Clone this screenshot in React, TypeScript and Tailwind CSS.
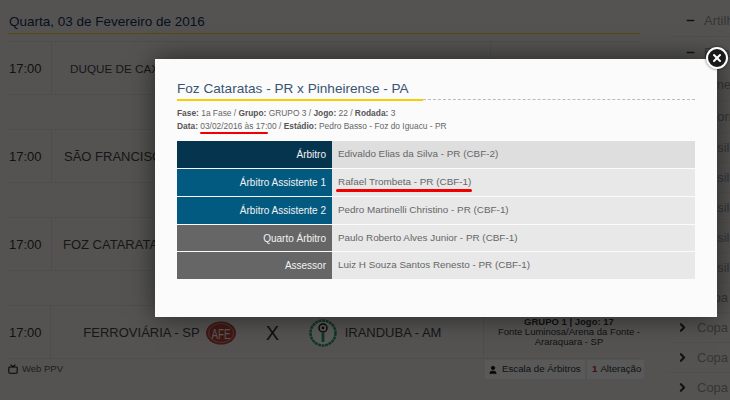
import React from 'react';
import { ChevronRight, Minus, User, Tv, X } from 'lucide-react';

type Match = {
  home: string;
  away: string;
  pad: string;
  size: string;
  logos?: boolean;
};

const matches: Match[] = [
  { home: 'DUQUE DE CAXIAS', away: 'TUPI - MG', pad: 'pl-[18px]', size: 'text-[11.7px]' },
  { home: 'SÃO FRANCISCO - PA', away: 'VILHENA - RO', pad: 'pl-[12px]', size: 'text-[13px]' },
  { home: 'FOZ CATARATAS - PR', away: 'PINHEIRENSE - PA', pad: 'pl-[11px]', size: 'text-[13px]' },
  { home: 'FERROVIÁRIA - SP', away: 'IRANDUBA - AM', pad: 'pl-[32px]', size: 'text-[13px]', logos: true },
];

const sidebar = [
  { label: 'Artilharia', open: true, h: 'h-[32px]' },
  { label: 'Estaduais', open: true, h: 'h-[32px]' },
  { label: 'Primeira', open: false, h: 'h-[32px]' },
  { label: 'Reforma', open: false, h: 'h-[32px]' },
  { label: 'Brasileiro', open: false, h: 'h-[30px]' },
  { label: 'Brasileiro', open: false, h: 'h-[30px]' },
  { label: 'Brasileiro', open: false, h: 'h-[30px]' },
  { label: 'Brasileiro', open: false, h: 'h-[30px]' },
  { label: 'Brasileiro', open: false, h: 'h-[30px]' },
  { label: 'Copa', open: false, h: 'h-[30px]' },
  { label: 'Copa', open: false, h: 'h-[30px]' },
  { label: 'Copa', open: false, h: 'h-[30px]' },
  { label: 'Copa', open: false, h: 'h-[30px]' },
];

const escala = [
  { role: 'Árbitro', name: 'Edivaldo Elias da Silva - PR (CBF-2)', label: 'bg-[#04344e]', value: 'bg-[#dedede]', h: 'h-[27px]' },
  { role: 'Árbitro Assistente 1', name: 'Rafael Trombeta - PR (CBF-1)', label: 'bg-[#035a80]', value: 'bg-[#e8e8e8]', h: 'h-[27px]' },
  { role: 'Árbitro Assistente 2', name: 'Pedro Martinelli Christino - PR (CBF-1)', label: 'bg-[#035a80]', value: 'bg-[#e8e8e8]', h: 'h-[27px]' },
  { role: 'Quarto Árbitro', name: 'Paulo Roberto Alves Junior - PR (CBF-1)', label: 'bg-[#666666]', value: 'bg-[#e8e8e8]', h: 'h-[26px]' },
  { role: 'Assessor', name: 'Luiz H Souza Santos Renesto - PR (CBF-1)', label: 'bg-[#666666]', value: 'bg-[#e8e8e8]', h: 'h-[27px]' },
];

const AfeLogo = () => (
  <svg width="30" height="24" viewBox="0 0 30 24">
    <ellipse cx="15" cy="12" rx="15" ry="11.5" fill="#b8453a" />
    <ellipse cx="15" cy="12" rx="12.5" ry="9.5" fill="none" stroke="#e8d0c8" strokeWidth="0.6" />
    <text x="15" y="17.5" textAnchor="middle" fontSize="15" textLength="19" lengthAdjust="spacingAndGlyphs" fill="#ffffff" fontFamily="Liberation Sans, sans-serif">AFE</text>
  </svg>
);

const IrandubaLogo = () => (
  <svg width="30" height="30" viewBox="0 0 30 30">
    <circle cx="15" cy="15" r="12.5" fill="#ffffff" stroke="#2e9e5b" strokeWidth="2.5" strokeDasharray="3 0.6" />
    <circle cx="15" cy="10" r="4" fill="#ffffff" stroke="#222222" strokeWidth="1.5" />
    <circle cx="15" cy="10" r="1.4" fill="#222222" />
    <rect x="13.6" y="15" width="2.8" height="9" fill="#2e9e5b" />
  </svg>
);

const App: React.FC = () => {
  return (
    <div className="relative w-[730px] h-[400px] overflow-hidden bg-[#f0eeec] font-['Liberation_Sans',Arial,sans-serif]">
      {/* pagina atras do modal */}
      <div className="flex">
        <div className="ml-2 w-[632px] shrink-0">
          <div className="h-[34px] pt-[13px] pl-px border-b border-[#ffd21f] text-[13.5px] leading-[17px] text-[#14305a]">
            Quarta, 03 de Fevereiro de 2016
          </div>
          <div className="h-[7px]" />
          {matches.map((m) => (
            <div key={m.home} className="border-t border-[#dcdcdc]">
              <div className="flex h-[53px] border-b border-[#dcdcdc] text-[#444444]">
                <div className="w-[44px] border-r border-[#dcdcdc] flex items-center pl-px pt-[2px] text-[13px] text-[#333333]">17:00</div>
                <div className={`w-[439px] flex items-center pt-[2px] border-r border-[#dcdcdc] whitespace-nowrap overflow-hidden ${m.size} ${m.pad}`}>
                  <span>{m.home}</span>
                  {m.logos && (
                    <>
                      <span className="ml-[6px] flex"><AfeLogo /></span>
                      <span className="ml-[30px] w-[30px] text-[20px] leading-none text-[#333333]">X</span>
                      <span className="ml-[12px] flex"><IrandubaLogo /></span>
                      <span className="ml-[7px]">{m.away}</span>
                    </>
                  )}
                </div>
                {m.logos && (
                  <div className="flex-1 flex flex-col items-center justify-center pl-[14px] text-center text-[9.5px] leading-[10px] text-[#333333] whitespace-nowrap">
                    <b>GRUPO 1 | Jogo: 17</b>
                    <span>Fonte Luminosa/Arena da Fonte -</span>
                    <span>Araraquara - SP</span>
                  </div>
                )}
              </div>
              <div className="flex h-[34px] pt-[1px] items-start text-[#555555]">
                {m.logos && (
                  <>
                    <span className="flex items-center gap-[4px] h-[18px] text-[9.5px]">
                      <Tv size={10} strokeWidth={2.5} className="text-[#111111]" />
                      Web PPV
                    </span>
                    <span className="ml-auto flex items-center gap-[2px] -mr-[4px] text-[9.7px] text-[#333333]">
                      <span className="flex items-center gap-[4px] w-[100px] h-[19px] pl-[3px] bg-white">
                        <User size={10} fill="#111111" className="text-[#111111]" />
                        Escala de Árbitros
                      </span>
                      <span className="flex items-center gap-[3px] w-[57px] h-[19px] pl-[5px] bg-white">
                        <b className="text-[#c0282d]">1</b> Alteração
                      </span>
                    </span>
                  </>
                )}
              </div>
            </div>
          ))}
        </div>
        <div className="ml-[28px] flex-1 pt-[5px] min-w-0">
          {sidebar.map((item, i) => (
            <div key={i} className={`${item.h} flex items-center border-b border-[#e4e2e0] text-[13px] text-[#999999] whitespace-nowrap ${item.open ? 'pl-[17px] gap-[8px]' : 'pl-[8px] gap-[8px]'}`}>
              {item.open ? (
                <Minus size={11} strokeWidth={3.5} className="text-[#333333] shrink-0" />
              ) : (
                <ChevronRight size={13} strokeWidth={4} className="text-[#333333] shrink-0" />
              )}
              {item.label}
            </div>
          ))}
        </div>
      </div>

      {/* escurecimento */}
      <div className="absolute inset-0 bg-black/65" />

      {/* modal */}
      <div className="absolute left-[155px] top-[59px] w-[562px] h-[258px] bg-[#fbfbfb] shadow-[0_0_24px_rgba(0,0,0,0.55)] pl-[22px] pr-[22px] pt-[21px]">
        <h1 className="text-[13.6px] leading-[17px] font-normal text-[#3a5573]">Foz Cataratas - PR x Pinheirense - PA</h1>
        <div className="flex mt-[2px] items-start">
          <div className="w-[246px] border-t-2 border-[#f4d000]" />
          <div className="flex-1 border-t border-dashed border-[#bbbbbb]" />
        </div>
        <div className="mt-[6px] text-[8.4px] leading-[13px] text-[#666666]">
          <p><b className="text-[#555555]">Fase:</b> 1a Fase / <b className="text-[#555555]">Grupo:</b> GRUPO 3 / <b className="text-[#555555]">Jogo:</b> 22 / <b className="text-[#555555]">Rodada:</b> 3</p>
          <p><b className="text-[#555555]">Data:</b> 03/02/2016 às 17:00 / <b className="text-[#555555]">Estádio:</b> Pedro Basso - Foz do Iguacu - PR</p>
        </div>
        <div className="mt-[8px]">
          {escala.map((row) => (
            <div key={row.role} className={`flex ${row.h} mb-px`}>
              <div className={`w-[155px] ${row.label} flex items-center justify-end pr-[6px] text-[10px] text-[#f2f2f2]`}>{row.role}</div>
              <div className={`flex-1 ${row.value} flex items-center pl-[6px] text-[9.9px] text-[#666666]`}>{row.name}</div>
            </div>
          ))}
        </div>
        {/* marcacoes em vermelho */}
        <div className="absolute left-[45px] top-[73px] w-[68px] h-[2px] rounded-full bg-[#f00000]" />
        <div className="absolute left-[181px] top-[130px] w-[136px] h-[3px] rounded-full bg-[#f00000]" />
      </div>

      {/* fechar */}
      <button className="absolute left-[706px] top-[47px] w-[22px] h-[22px] rounded-full bg-[#1a1a1a] border-2 border-white shadow-[0_0_3px_rgba(0,0,0,0.6)] flex items-center justify-center">
        <X size={12} strokeWidth={4} className="text-white" />
      </button>
    </div>
  );
};

export default App;
